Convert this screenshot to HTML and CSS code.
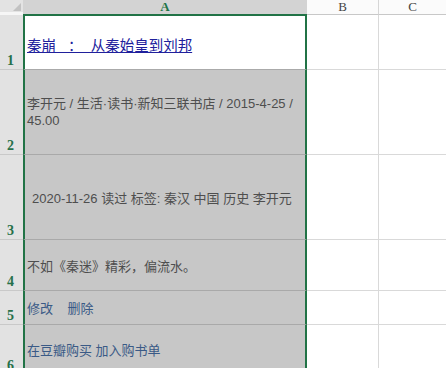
FILE: index.html
```html
<!DOCTYPE html>
<html lang="zh-CN">
<head>
  <meta charset="UTF-8">
  <title>Sheet1</title>
  <link rel="stylesheet" href="styles.css">
</head>
<body>
  <div class="sheet">
    <div class="corner"><span class="corner-tri"></span></div>
    <div class="col-head col-sel">A</div>
    <div class="col-head">B</div>
    <div class="col-head col-last">C</div>

    <div class="row-head">1</div>
    <div class="cell cell-a active"><a class="link" href="#">秦崩   ：  从秦始皇到刘邦</a></div>
    <div class="cell"></div>
    <div class="cell cell-last"></div>

    <div class="row-head">2</div>
    <div class="cell cell-a sel"><span class="txt wrap">李开元 / 生活·读书·新知三联书店 / 2015-4-25 /<br>45.00</span></div>
    <div class="cell"></div>
    <div class="cell cell-last"></div>

    <div class="row-head">3</div>
    <div class="cell cell-a sel"><span class="txt indent">2020-11-26 读过 标签: 秦汉 中国 历史 李开元</span></div>
    <div class="cell"></div>
    <div class="cell cell-last"></div>

    <div class="row-head">4</div>
    <div class="cell cell-a sel"><span class="txt">不如《秦迷》精彩，偏流水。</span></div>
    <div class="cell"></div>
    <div class="cell cell-last"></div>

    <div class="row-head">5</div>
    <div class="cell cell-a sel"><span class="txt action">修改    删除</span></div>
    <div class="cell"></div>
    <div class="cell cell-last"></div>

    <div class="row-head">6</div>
    <div class="cell cell-a sel"><span class="txt action">在豆瓣购买 加入购书单</span></div>
    <div class="cell"></div>
    <div class="cell cell-last"></div>
  </div>
</body>
</html>
```

FILE: styles.css
```css
body {
  margin: 0;
  background: #fff;
  font-family: "Liberation Sans", "Noto Sans CJK SC", sans-serif;
}
.sheet {
  width: 446px;
  height: 368px;
  overflow: hidden;
  display: grid;
  grid-template-columns: 23px 284px 72px 1fr;
  grid-template-rows: 15px 55px 85px 85px 51px 34px 50px;
}
.corner {
  box-sizing: border-box;
  background: #e3e3e3;
  border-bottom: 3px solid #f6f6f6;
  display: flex;
  justify-content: flex-end;
  align-items: flex-end;
  padding: 0 2px 1px 0;
}
.corner-tri {
  width: 8px;
  height: 8px;
  background: #c2c2c2;
  clip-path: polygon(100% 0, 100% 100%, 0 100%);
}
.col-head {
  box-sizing: border-box;
  background: #fbfbfb;
  border-right: 1px solid #d6d6d6;
  border-bottom: 1px solid #c8c8c8;
  font-family: "Liberation Serif", serif;
  font-size: 13px;
  line-height: 14px;
  color: #444;
  text-align: center;
}
.col-sel {
  background: #d3d3d3;
  color: #217346;
  font-weight: bold;
  border-right: none;
  border-bottom-color: #217346;
}
.col-last {
  border-right: none;
}
.row-head {
  box-sizing: border-box;
  background: #e2e2e2;
  border-bottom: 1px solid #c9c9c9;
  display: flex;
  align-items: flex-end;
  justify-content: center;
  padding: 0 2px 1px 0;
  font-family: "Liberation Serif", serif;
  font-weight: bold;
  font-size: 14px;
  line-height: 14px;
  color: #27714a;
}
.cell {
  box-sizing: border-box;
  border-right: 1px solid #d9d9d9;
  border-bottom: 1px solid #d9d9d9;
  display: flex;
  align-items: center;
  font-size: 13px;
}
.cell-last {
  border-right: none;
}
/* column A carries the green selection frame */
.cell-a {
  border-left: 2px solid #217346;
  border-right: 2px solid #217346;
  padding-left: 2px;
}
.active {
  background: #fff;
  border-top: 1px solid #217346;
  border-bottom-color: #aaa;
  padding-top: 3px;
}
.sel {
  background: #c7c7c7;
  border-bottom-color: #a9a9a9;
}
.link {
  font-size: 14.5px;
  color: #20209c;
  text-decoration: underline;
  white-space: pre;
}
.txt {
  color: #4e4e4e;
  white-space: pre;
}
.indent {
  padding-left: 5px;
}
.wrap {
  line-height: 17px;
}
.action {
  color: #3a5a86;
}
```
